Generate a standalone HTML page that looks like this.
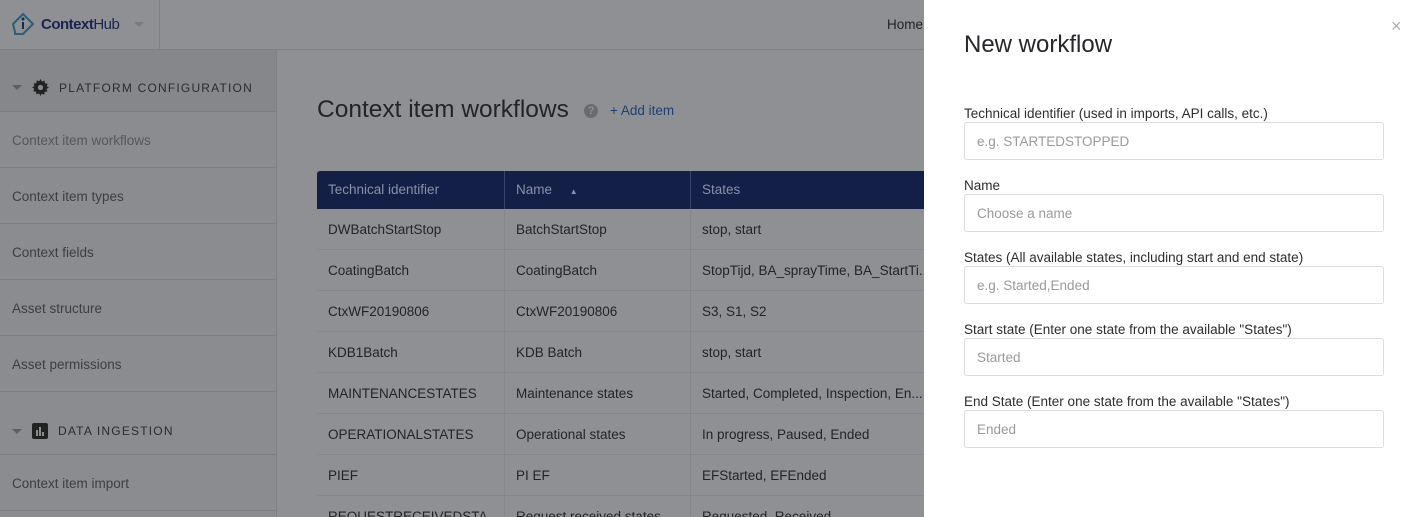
<!DOCTYPE html>
<html style="overflow:hidden;height:517px"><head><style>
*{box-sizing:border-box;margin:0;padding:0}
html,body{overflow:hidden}
body{width:1412px;height:517px;overflow:hidden;font-family:"Liberation Sans",sans-serif;background:#8f9094;position:relative;color:#2a2c30}
.top{position:absolute;left:0;top:0;width:924px;height:50px;background:#8f9094;border-bottom:1px solid #7f8084}
.logo{position:absolute;left:0;top:0;width:160px;height:50px;border-right:1px solid #808185}
.side{position:absolute;left:0;top:50px;width:277px;height:467px;background:#8b8c90;border-right:1px solid #7f8084;overflow:hidden}
.sec{height:62px;background:#86878b;border-bottom:1px solid #7c7d81;display:flex;align-items:center;padding-top:14px;font-size:12px;letter-spacing:1.2px;color:#2a2c30}
.item{height:56px;border-bottom:1px solid #7e7f83;font-size:13.5px;color:#3c3e42;padding-left:12px;line-height:58px}
.tri{width:0;height:0;border-left:5px solid transparent;border-right:5px solid transparent;border-top:5px solid #5e5f63;margin:0 10px 0 12px}
h1{position:absolute;left:317px;top:96px;font-size:24.5px;font-weight:normal;color:#222428}
.tbl{position:absolute;left:317px;top:171px;width:607px;height:346px;overflow:hidden}
.th{height:38px;background:#141f47;color:#8a90a6;font-size:13.5px;display:flex;border-radius:3px 0 0 0}
.row{height:41px;display:flex;font-size:13.5px;color:#222428;border-bottom:1px solid #85868a}
.c1{width:188px;padding-left:11px;border-right:1px solid #85868a;line-height:42px;white-space:nowrap;overflow:hidden}
.c2{width:186px;padding-left:11px;border-right:1px solid #85868a;line-height:42px;white-space:nowrap;overflow:hidden}
.c3{flex:1;padding-left:11px;line-height:42px;white-space:nowrap;overflow:hidden}
.th .c1,.th .c2,.th .c3{line-height:38px;border-color:#3a4466}
.modal{position:absolute;left:924px;top:0;width:488px;height:517px;background:#fff}
.modal h2{position:absolute;left:40px;top:31px;font-size:24px;font-weight:normal;color:#25272b}
.lab{position:absolute;left:40px;font-size:13.5px;color:#2b2d31}
.inp{position:absolute;left:40px;width:420px;height:38px;border:1px solid #dcdcdc;border-radius:3px;font-size:13.5px;color:#9a9a9a;padding-left:12px;line-height:38px}
</style></head><body>
<div class="top">
 <div class="logo">
  <svg style="position:absolute;left:11px;top:12px" width="24" height="26" viewBox="0 0 24 26"><path d="M12 2 L22 12 L12 22 L4 22 L4 20 L2 12 Z" fill="none" stroke="#2a5e7a" stroke-width="2"/><circle cx="12" cy="7" r="1.5" fill="#1a2a55"/><rect x="11" y="10" width="2" height="7" fill="#1a2a55"/></svg>
  <span style="position:absolute;left:41px;top:16px;font-size:15px;color:#1a2450;font-weight:bold;letter-spacing:-0.5px">Context<span style="font-weight:normal">Hub</span></span>
  <div style="position:absolute;left:134px;top:22px;border-left:5px solid transparent;border-right:5px solid transparent;border-top:5px solid #7a7b7f"></div>
 </div>
 <span style="position:absolute;left:887px;top:17px;font-size:13.5px;color:#222">Home</span>
</div>
<div class="side">
 <div class="sec"><div class="tri"></div><svg width="17" height="17" viewBox="0 0 16 16" style="margin-right:10px"><path d="M8 0l1.3 2.3 2.5-.8.3 2.6 2.6.3-.8 2.5L16 8l-2.3 1.3.8 2.5-2.6.3-.3 2.6-2.5-.8L8 16l-1.3-2.3-2.5.8-.3-2.6-2.6-.3.8-2.5L0 8l2.3-1.3-.8-2.5 2.6-.3.3-2.6 2.5.8z" fill="#222"/><circle cx="8" cy="8" r="2.5" fill="#86878b"/></svg>PLATFORM CONFIGURATION</div>
 <div class="item" style="color:#55575b">Context item workflows</div>
 <div class="item">Context item types</div>
 <div class="item">Context fields</div>
 <div class="item">Asset structure</div>
 <div class="item">Asset permissions</div>
 <div class="sec" style="background:#8b8c90;height:63px;padding-top:16px"><div class="tri"></div><svg width="16" height="16" style="margin-right:10px"><rect width="16" height="16" rx="2" fill="#222"/><rect x="4" y="7" width="2" height="6" fill="#8b8c90"/><rect x="7" y="4" width="2" height="9" fill="#8b8c90"/><rect x="10" y="9" width="2" height="4" fill="#8b8c90"/></svg>DATA INGESTION</div>
 <div class="item">Context item import</div>
</div>
<h1>Context item workflows</h1>
<div style="position:absolute;left:584px;top:104px;width:14px;height:14px;border-radius:50%;background:#6a6b6f;color:#8f9094;font-size:11px;text-align:center;line-height:14px;font-weight:bold">?</div>
<span style="position:absolute;left:610px;top:103px;font-size:13.5px;color:#1e3f73">+ Add item</span>
<div class="tbl">
 <div class="th"><div class="c1">Technical identifier</div><div class="c2">Name <span style="font-size:8px;margin-left:14px">▲</span></div><div class="c3">States</div></div>
 <div class="row"><div class="c1">DWBatchStartStop</div><div class="c2">BatchStartStop</div><div class="c3">stop, start</div></div>
 <div class="row"><div class="c1">CoatingBatch</div><div class="c2">CoatingBatch</div><div class="c3">StopTijd, BA_sprayTime, BA_StartTi...</div></div>
 <div class="row"><div class="c1">CtxWF20190806</div><div class="c2">CtxWF20190806</div><div class="c3">S3, S1, S2</div></div>
 <div class="row"><div class="c1">KDB1Batch</div><div class="c2">KDB Batch</div><div class="c3">stop, start</div></div>
 <div class="row"><div class="c1">MAINTENANCESTATES</div><div class="c2">Maintenance states</div><div class="c3">Started, Completed, Inspection, En...</div></div>
 <div class="row"><div class="c1">OPERATIONALSTATES</div><div class="c2">Operational states</div><div class="c3">In progress, Paused, Ended</div></div>
 <div class="row"><div class="c1">PIEF</div><div class="c2">PI EF</div><div class="c3">EFStarted, EFEnded</div></div>
 <div class="row"><div class="c1">REQUESTRECEIVEDSTA</div><div class="c2">Request received states</div><div class="c3">Requested, Received</div></div>
</div>
<div class="modal">
 <h2>New workflow</h2>
 <span style="position:absolute;left:467px;top:16px;font-size:18px;color:#b0b0b0">×</span>
 <div class="lab" style="top:106px">Technical identifier (used in imports, API calls, etc.)</div>
 <div class="inp" style="top:122px">e.g. STARTEDSTOPPED</div>
 <div class="lab" style="top:178px">Name</div>
 <div class="inp" style="top:194px">Choose a name</div>
 <div class="lab" style="top:250px">States (All available states, including start and end state)</div>
 <div class="inp" style="top:266px">e.g. Started,Ended</div>
 <div class="lab" style="top:322px">Start state (Enter one state from the available "States")</div>
 <div class="inp" style="top:338px">Started</div>
 <div class="lab" style="top:394px">End State (Enter one state from the available "States")</div>
 <div class="inp" style="top:410px">Ended</div>
</div>
</body></html>
